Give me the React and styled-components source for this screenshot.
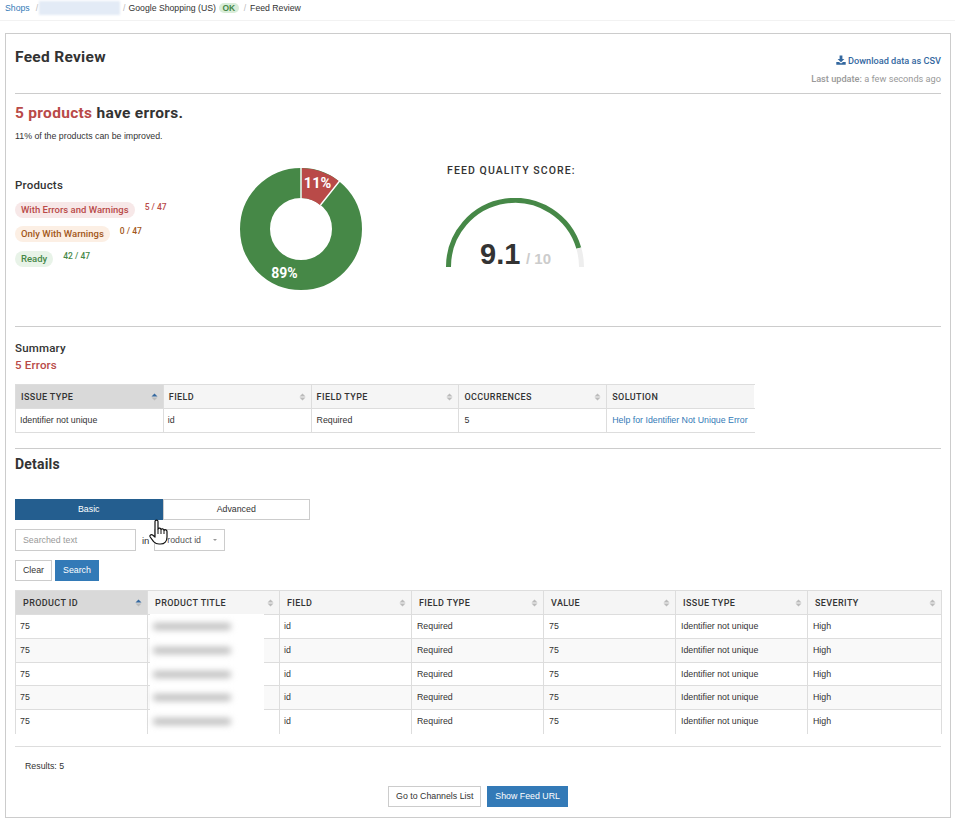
import React from 'react';
import styled, { createGlobalStyle } from 'styled-components';

const GlobalStyle = createGlobalStyle`
  html, body {
    margin: 0;
    padding: 0;
    background: #fff;
    color: #333;
    font-family: 'Liberation Sans', Arial, sans-serif;
    font-size: 8.8px;
  }
  * {
    box-sizing: border-box;
  }
`;

const colors = {
  red: '#b94a48',
  green: '#468847',
  blue: '#337ab7',
  line: '#ddd',
  head: '#f5f5f5',
  sorted: '#d9d9d9',
};

const Page = styled.div`
  position: relative;
  width: 955px;
  height: 821px;
  overflow: hidden;
`;

const Breadcrumb = styled.div`
  display: flex;
  align-items: center;
  height: 21px;
  padding: 0 0 4px 5px;
  border-bottom: 1px solid #f2f2f2;
  font-size: 8.7px;
  margin-bottom: 12px;
`;

const Crumb = styled.span`
  color: ${props => (props.$link ? colors.blue : '#333')};
`;

const Slash = styled.span`
  color: #bbb;
  margin: ${props => props.$margin || '0 4px'};
`;

const BlurredShop = styled.span`
  display: block;
  width: 81px;
  height: 14px;
  background: #e3ebf6;
  filter: blur(1px);
`;

const OkBadge = styled.span`
  display: inline-block;
  margin-left: 3px;
  padding: 0 3.5px;
  height: 10px;
  line-height: 10px;
  border-radius: 5px;
  background: #d9edd9;
  color: ${colors.green};
  font-weight: 700;
  font-size: 8.5px;
`;

const Panel = styled.div`
  width: 946px;
  height: 785px;
  margin-left: 5px;
  padding: 0 9px;
  border: 1px solid #ccc;
`;

const PanelHeader = styled.div`
  display: flex;
  justify-content: space-between;
  height: 60px;
  border-bottom: 1px solid #ccc;
`;

const Title = styled.h1`
  margin: 14px 0 0;
  font-family: Roboto, sans-serif;
  font-size: 15.5px;
  line-height: 18px;
  font-weight: 700;
  letter-spacing: 0.3px;
  color: #333;
`;

const HeaderMeta = styled.div`
  display: flex;
  flex-direction: column;
  align-items: flex-end;
  padding-top: 20px;
  font-family: Roboto, sans-serif;
  font-size: 9.2px;
`;

const DownloadLink = styled.a`
  display: flex;
  align-items: center;
  gap: 2px;
  height: 12px;
  color: #34689f;
  font-weight: 500;
`;

const UpdateLine = styled.div`
  margin-top: 7px;
  color: #999;
  span {
    font-weight: 500;
  }
`;

const ErrorHeadline = styled.h2`
  margin: 10px 0 0;
  font-family: Roboto, sans-serif;
  font-size: 15.5px;
  line-height: 19px;
  font-weight: 700;
  letter-spacing: 0.3px;
  color: #333;
`;

const RedText = styled.span`
  color: ${colors.red};
`;

const Improve = styled.p`
  margin: 8px 0 0;
  font-size: 8.8px;
  line-height: 11px;
  color: #333;
`;

const Overview = styled.div`
  display: flex;
  height: 185px;
  border-bottom: 1px solid #ccc;
`;

const Legend = styled.div`
  width: 224px;
  padding-top: 37px;
`;

const SmallHeading = styled.div`
  font-family: Roboto, sans-serif;
  font-size: 11.5px;
  line-height: 13px;
  font-weight: 500;
  letter-spacing: 0.2px;
  color: #333;
`;

const LegendRows = styled.div`
  margin-top: 10px;
`;

const LegendRow = styled.div`
  display: flex;
  align-items: flex-start;
  height: ${props => props.$height || 24}px;
`;

const Pill = styled.span`
  display: block;
  height: 16px;
  line-height: 16px;
  padding: 0 6px;
  border-radius: 8px;
  font-family: Roboto, sans-serif;
  font-weight: 500;
  font-size: 9.5px;
  color: ${props => props.$color};
  background: ${props => props.$bg};
`;

const Count = styled.span`
  margin: -1px 0 0 10px;
  line-height: 13px;
  font-family: Roboto, sans-serif;
  font-weight: 500;
  font-size: 8.5px;
  color: ${props => props.$color};
`;

const DonutBox = styled.div`
  width: 208px;
  padding-top: 25px;
`;

const ScoreBox = styled.div`
  padding-top: 23px;
`;

const ScoreTitle = styled.div`
  font-family: Roboto, sans-serif;
  font-size: 10.5px;
  line-height: 12px;
  font-weight: 500;
  letter-spacing: 1.1px;
  color: #333;
`;

const Gauge = styled.svg`
  display: block;
  margin: 21px 0 0 -1px;
`;

const SummaryBlock = styled.div`
  padding-top: 15px;
`;

const SummaryErrors = styled(SmallHeading)`
  margin-top: 4px;
  color: ${colors.red};
`;

const Table = styled.table`
  table-layout: fixed;
  border-collapse: collapse;
  width: ${props => props.$width}px;
  margin-top: ${props => props.$top}px;
`;

const Th = styled.th`
  position: relative;
  height: 24px;
  padding: 0 0 0 ${props => props.$pad || 5}px;
  text-align: left;
  background: ${props => (props.$sorted ? colors.sorted : colors.head)};
  border: 1px solid ${colors.line};
  border-right-color: ${props => (props.$open ? 'transparent' : colors.line)};
  font-family: Roboto, sans-serif;
  font-size: 9px;
  font-weight: 500;
  letter-spacing: 0.4px;
  color: #333;
`;

const Td = styled.td`
  height: ${props => props.$height || 24}px;
  padding: 0 0 1px ${props => props.$pad || 5}px;
  border: 1px solid ${colors.line};
  border-bottom-color: ${props => (props.$openBottom ? 'transparent' : colors.line)};
  border-right-color: ${props => (props.$openRight ? 'transparent' : colors.line)};
  background: ${props => (props.$odd ? '#f9f9f9' : '#fff')};
  font-size: 8.8px;
  color: #333;
  white-space: nowrap;
`;

const SolutionLink = styled.a`
  color: ${colors.blue};
`;

const SortIcon = styled.svg`
  position: absolute;
  right: 5px;
  top: 50%;
  margin-top: -4px;
`;

const Section = styled.div`
  margin-top: 15px;
  border-top: 1px solid #ccc;
`;

const DetailsTitle = styled.h3`
  margin: 7px 0 0;
  font-family: Roboto, sans-serif;
  font-size: 14px;
  line-height: 17px;
  font-weight: 700;
  letter-spacing: 0.2px;
  color: #333;
`;

const Tabs = styled.div`
  display: flex;
  margin-top: 26px;
  width: 295px;
`;

const Tab = styled.div`
  flex: 1;
  height: 21px;
  line-height: 19px;
  text-align: center;
  border: 1px solid ${props => (props.$active ? '#245e8f' : '#ccc')};
  background: ${props => (props.$active ? '#245e8f' : '#fff')};
  color: ${props => (props.$active ? '#fff' : '#333')};
`;

const SearchRow = styled.div`
  display: flex;
  align-items: center;
  margin-top: 9px;
`;

const TextBox = styled.div`
  width: 121px;
  height: 22px;
  line-height: 20px;
  padding-left: 7px;
  border: 1px solid #ccc;
  color: #999;
`;

const InLabel = styled.span`
  margin: 0 5px 0 6px;
  font-size: 9.5px;
  color: #333;
`;

const SelectBox = styled.div`
  display: flex;
  align-items: center;
  justify-content: space-between;
  width: 71px;
  height: 22px;
  padding: 0 7px 0 6px;
  border: 1px solid #ccc;
  color: #555;
`;

const Caret = styled.span`
  width: 0;
  height: 0;
  border-left: 2.5px solid transparent;
  border-right: 2.5px solid transparent;
  border-top: 2.5px solid #999;
`;

const ButtonRow = styled.div`
  display: flex;
  justify-content: ${props => props.$justify || 'flex-start'};
  gap: ${props => props.$gap}px;
  margin-top: ${props => props.$top}px;
`;

const Button = styled.div`
  height: 21px;
  line-height: 19px;
  padding: 0 7px;
  border: 1px solid ${props => (props.$primary ? colors.blue : '#ccc')};
  background: ${props => (props.$primary ? colors.blue : '#fff')};
  color: ${props => (props.$primary ? '#fff' : '#333')};
`;

const TitleCell = styled(Td)`
  position: relative;
`;

const TitleMask = styled.div`
  position: absolute;
  left: 2px;
  top: -1px;
  bottom: -1px;
  width: 114px;
  display: flex;
  align-items: center;
  padding-left: 3px;
  background: #fff;
`;

const BlurredTitle = styled.div`
  width: 78px;
  height: 7px;
  border-radius: 3px;
  background: #bfbfbf;
  filter: blur(3px);
`;

const FooterLine = styled.div`
  margin-top: 12px;
  border-top: 1px solid ${colors.line};
`;

const Results = styled.div`
  margin-top: 14px;
  padding-left: 10px;
  line-height: 11px;
  color: #333;
`;

const HandCursor = styled.svg`
  position: absolute;
  left: 149px;
  top: 519px;
`;

const SortArrows = ({ active }) => (
  <SortIcon width="7" height="8" viewBox="0 0 7 8">
    <path d="M3.5 0.5 L6.5 3.5 H0.5 Z" fill={active ? '#34689f' : '#bbb'} />
    <path d="M3.5 7.5 L6.5 4.5 H0.5 Z" fill="#bbb" />
  </SortIcon>
);

const DownloadIcon = () => (
  <svg width="10" height="10" viewBox="0 0 10 10">
    <path d="M3.6 0.5 H6.4 V4 H8.4 L5 7.3 L1.6 4 H3.6 Z" fill="#34689f" />
    <path d="M0.3 7 H3 L5 8.6 L7 7 H9.7 V9.7 H0.3 Z" fill="#34689f" />
  </svg>
);

const Donut = () => (
  <svg width="124" height="124" viewBox="0 0 124 124">
    <circle cx="62" cy="62" r="46" fill="none" stroke={colors.green} strokeWidth="30" />
    <path
      d="M62.7 1 A61 61 0 0 1 100 14.3 L81 37.9 A31 31 0 0 0 62.7 31 Z"
      fill={colors.red}
    />
    <path d="M62 0.5 V31 M101 13.5 L81.5 38" stroke="#fff" strokeWidth="1.4" fill="none" />
    <text x="78.5" y="21" textAnchor="middle" fill="#fff" fontFamily="Roboto, sans-serif" fontWeight="700" fontSize="14.5">
      11%
    </text>
    <text x="45.5" y="111" textAnchor="middle" fill="#fff" fontFamily="Roboto, sans-serif" fontWeight="700" fontSize="14">
      89%
    </text>
  </svg>
);

const ScoreGauge = () => (
  <Gauge width="140" height="76" viewBox="0 0 140 76">
    <path d="M2.5 69 A66.5 66.5 0 0 1 132.8 50.1" fill="none" stroke={colors.green} strokeWidth="5" />
    <path d="M132.8 50.1 A66.5 66.5 0 0 1 135.5 69" fill="none" stroke="#eee" strokeWidth="5" />
    <text x="34" y="66" fill="#333" fontFamily="'Liberation Sans', sans-serif" fontWeight="700" fontSize="29">
      9.1
    </text>
    <text x="80" y="66" fill="#ccc" fontFamily="'Liberation Sans', sans-serif" fontWeight="700" fontSize="15">
      / 10
    </text>
  </Gauge>
);

const Hand = () => (
  <HandCursor width="21" height="26" viewBox="0 0 21 26">
    <path
      d="M6 2.5 C6 0.6 9 0.6 9 2.5 V10 C9.4 8.7 11.8 8.7 12 10.5 C12.5 9.4 14.8 9.6 15 11.3 C15.7 10.3 18 10.6 18 12.5 V18 C18 22 15.5 25 11.5 25 H10 C7.5 25 6 24 4.6 22.6 L1.2 18 C0.2 16.4 2.2 14.8 3.6 16 L6 18 Z"
      fill="#fff"
      stroke="#111"
      strokeWidth="1.2"
      strokeLinejoin="round"
    />
    <path d="M9 10 V15 M12 10.5 V15 M15 11.3 V15" stroke="#111" strokeWidth="1" fill="none" />
  </HandCursor>
);

const summaryHeads = ['ISSUE TYPE', 'FIELD', 'FIELD TYPE', 'OCCURRENCES', 'SOLUTION'];
const detailHeads = [
  'PRODUCT ID',
  'PRODUCT TITLE',
  'FIELD',
  'FIELD TYPE',
  'VALUE',
  'ISSUE TYPE',
  'SEVERITY',
];
const detailWidths = [132, 132, 132, 132, 132, 132, 134];
const detailRows = [
  { id: 0, height: 24 },
  { id: 1, height: 24 },
  { id: 2, height: 23 },
  { id: 3, height: 24 },
  { id: 4, height: 24 },
];

const DetailRow = ({ id, height }) => {
  const cell = { $odd: id % 2 === 1, $openBottom: id === 4, $height: height };
  return (
    <tr>
      <Td {...cell} $pad={4}>75</Td>
      <TitleCell {...cell}>
        <TitleMask>
          <BlurredTitle />
        </TitleMask>
      </TitleCell>
      <Td {...cell} $pad={4}>id</Td>
      <Td {...cell}>Required</Td>
      <Td {...cell}>75</Td>
      <Td {...cell}>Identifier not unique</Td>
      <Td {...cell}>High</Td>
    </tr>
  );
};

const App = () => (
  <Page>
    <GlobalStyle />
    <Breadcrumb>
      <Crumb $link>Shops</Crumb>
      <Slash $margin="0 1px 0 6px">/</Slash>
      <BlurredShop />
      <Slash $margin="0 3px">/</Slash>
      <Crumb>Google Shopping (US)</Crumb>
      <OkBadge>OK</OkBadge>
      <Slash $margin="0 4px 0 5px">/</Slash>
      <Crumb>Feed Review</Crumb>
    </Breadcrumb>

    <Panel>
      <PanelHeader>
        <Title>Feed Review</Title>
        <HeaderMeta>
          <DownloadLink>
            <DownloadIcon />
            Download data as CSV
          </DownloadLink>
          <UpdateLine>
            <span>Last update:</span> a few seconds ago
          </UpdateLine>
        </HeaderMeta>
      </PanelHeader>

      <ErrorHeadline>
        <RedText>5 products</RedText> have errors.
      </ErrorHeadline>
      <Improve>11% of the products can be improved.</Improve>

      <Overview>
        <Legend>
          <SmallHeading>Products</SmallHeading>
          <LegendRows>
            <LegendRow>
              <Pill $color={colors.red} $bg="#f7e8e8">With Errors and Warnings</Pill>
              <Count $color={colors.red}>5 / 47</Count>
            </LegendRow>
            <LegendRow $height={25}>
              <Pill $color="#a3581a" $bg="#fcefe4">Only With Warnings</Pill>
              <Count $color="#a3581a">0 / 47</Count>
            </LegendRow>
            <LegendRow>
              <Pill $color={colors.green} $bg="#e8f3e8">Ready</Pill>
              <Count $color={colors.green}>42 / 47</Count>
            </LegendRow>
          </LegendRows>
        </Legend>
        <DonutBox>
          <Donut />
        </DonutBox>
        <ScoreBox>
          <ScoreTitle>FEED QUALITY SCORE:</ScoreTitle>
          <ScoreGauge />
        </ScoreBox>
      </Overview>

      <SummaryBlock>
        <SmallHeading>Summary</SmallHeading>
        <SummaryErrors>5 Errors</SummaryErrors>
        <Table $width={740} $top={12}>
          <thead>
            <tr>
              {summaryHeads.map((head, i) => (
                <Th key={head} $sorted={i === 0} $open={i === 4}>
                  {head}
                  {i < 4 && <SortArrows active={i === 0} />}
                </Th>
              ))}
            </tr>
          </thead>
          <tbody>
            <tr>
              <Td $pad={4}>Identifier not unique</Td>
              <Td $pad={4}>id</Td>
              <Td>Required</Td>
              <Td>5</Td>
              <Td $openRight>
                <SolutionLink>Help for Identifier Not Unique Error</SolutionLink>
              </Td>
            </tr>
          </tbody>
        </Table>
      </SummaryBlock>

      <Section>
        <DetailsTitle>Details</DetailsTitle>
        <Tabs>
          <Tab $active>Basic</Tab>
          <Tab>Advanced</Tab>
        </Tabs>
        <SearchRow>
          <TextBox>Searched text</TextBox>
          <InLabel>in</InLabel>
          <SelectBox>
            Product id
            <Caret />
          </SelectBox>
        </SearchRow>
        <ButtonRow $gap={3} $top={9}>
          <Button>Clear</Button>
          <Button $primary>Search</Button>
        </ButtonRow>
        <Table $width={926} $top={9}>
          <colgroup>
            {detailWidths.map((width, i) => (
              <col key={i} width={width} />
            ))}
          </colgroup>
          <thead>
            <tr>
              {detailHeads.map((head, i) => (
                <Th key={head} $sorted={i === 0} $pad={7}>
                  {head}
                  <SortArrows active={i === 0} />
                </Th>
              ))}
            </tr>
          </thead>
          <tbody>
            {detailRows.map(row => (
              <DetailRow key={row.id} id={row.id} height={row.height} />
            ))}
          </tbody>
        </Table>
        <FooterLine />
        <Results>Results: 5</Results>
        <ButtonRow $gap={6} $top={14} $justify="center">
          <Button>Go to Channels List</Button>
          <Button $primary>Show Feed URL</Button>
        </ButtonRow>
      </Section>
    </Panel>
    <Hand />
  </Page>
);

export default App;
